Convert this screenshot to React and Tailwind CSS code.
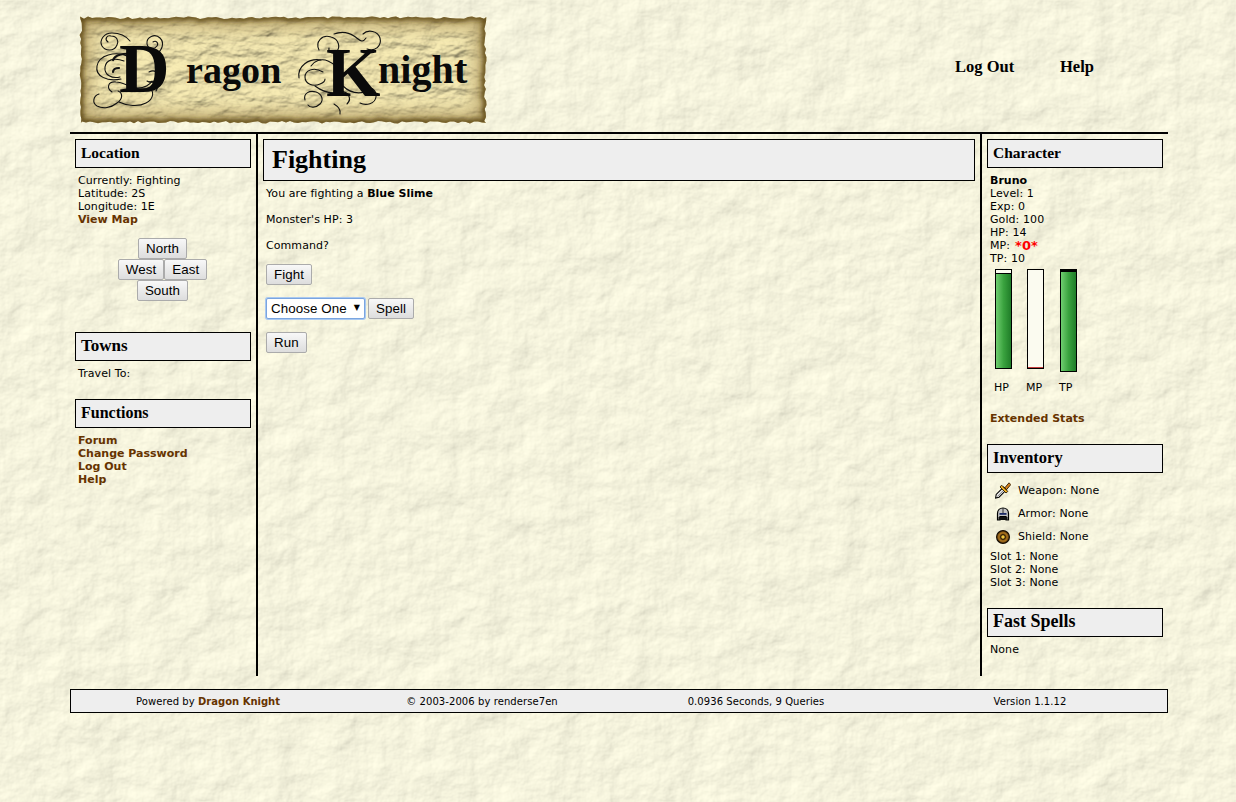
import React from "react";

const btn = "h-[21px] px-[7px] border border-[#ababab] rounded-[2px] bg-linear-to-b from-[#f8f8f8] to-[#dddddd] text-[13.33px] leading-[19px] text-black [font-family:'Liberation_Sans',sans-serif]";
const gothic = "[font-family:'Liberation_Serif',serif] font-bold text-black";
const link = "font-bold tracking-normal text-[#663300]";

function Title({ children, size }) {
  return (
    <div className={"h-[29px] border border-black bg-[#eeeeee] flex items-center pl-[5px] pb-[2px] tracking-normal " + size + " " + gothic}>
      {children}
    </div>
  );
}

function edgePoints() {
  const w = 408, h = 108, pts = [];
  const j = (i) => (Math.sin(i * 12.9898) * 43758.5453 % 1 + 1) % 1;
  let n = 0;
  for (let x = 1; x < w - 1; x += 4) pts.push([x, 0.5 + j(n++) * 2.5]);
  for (let y = 1; y < h - 1; y += 4) pts.push([w - 0.5 - j(n++) * 2.5, y]);
  for (let x = w - 1; x > 1; x -= 4) pts.push([x, h - 0.5 - j(n++) * 2.5]);
  for (let y = h - 1; y > 1; y -= 4) pts.push([0.5 + j(n++) * 2.5, y]);
  return pts.map((p) => p[0].toFixed(1) + "," + p[1].toFixed(1)).join(" ");
}

function Logo() {
  const pts = edgePoints();
  return (
    <svg width="408" height="108" viewBox="0 0 408 108" className="block">
      <defs>
        <clipPath id="parch"><polygon points={pts} /></clipPath>
        <filter id="ptex" x="0" y="0" width="100%" height="100%">
          <feTurbulence type="fractalNoise" baseFrequency="0.04 0.08" numOctaves="5" seed="8" result="n" />
          <feDiffuseLighting in="n" surfaceScale="4.5" lightingColor="#f0e4ae" diffuseConstant="1.08" result="l">
            <feDistantLight azimuth="235" elevation="60" />
          </feDiffuseLighting>
        </filter>
        <filter id="eblur" x="-5%" y="-5%" width="110%" height="110%"><feGaussianBlur stdDeviation="2.5" /></filter>
        <filter id="eblur2" x="-5%" y="-5%" width="110%" height="110%"><feGaussianBlur stdDeviation="8" /></filter>
      </defs>
      <g clipPath="url(#parch)">
        <rect width="408" height="108" fill="#e8d99c" filter="url(#ptex)" />
        <polygon points={pts} fill="none" stroke="#a8925a" strokeWidth="20" filter="url(#eblur2)" opacity="0.7" />
        <polygon points={pts} fill="none" stroke="#5f4818" strokeWidth="6" filter="url(#eblur)" />
      </g>
      <g fill="none" stroke="#111" strokeWidth="1.1" strokeLinecap="round">
        <g>
          <path d="M29 26c-4-3-1-7 3-6c6 0 8 5 6 9c-3 7-12 6-15 1c-3-6 2-13 10-13c8 0 14 3 18 8" />
          <path d="M74 26c3-2 6 1 4 4c-3 4-9 3-10-2c-1-7 8-11 13-6c5 5 2 13-4 16" />
          <path d="M45 45c-10-4-18-1-19 6c-1 8 7 12 15 10" />
          <path d="M48 40c-12-5-28-1-30 10c-2 10 10 16 24 13" />
          <path d="M52 38c-8-1-16 1-18 6M40 52c-4 0-6 2-6 4" strokeWidth="2.2" />
          <path d="M33 76c-6-4-4-11 4-10c8 0 14 6 22 6c6 0 12-3 14-7" />
          <path d="M20 78c-6 2-7 9-2 12c6 3 14 2 20-3c6-4 6-10 1-12" />
          <path d="M40 86c8 4 20 5 27 1c8-4 9-13 2-15" />
          <path d="M70 56c6-3 10 1 8 6c-2 4-7 5-10 3" />
          <path d="M70 66c7-1 10 4 7 9" />
        </g>
        <g>
          <path d="M240 34c-4-8 3-16 12-13c8 2 10 11 5 15c-4 2-8 0-7-4" />
          <path d="M255 18c8-3 14-2 20 2c6 4 8 8 12 2" />
          <path d="M284 18c5-5 15-3 17 4c2 8-5 14-13 11" />
          <path d="M244 56c-10-6-18-1-18 5c0 7 8 10 15 7c3-1 5-3 5-5" />
          <path d="M232 50c3-5 10-8 17-5c7 3 10 8 14 9" />
          <path d="M220 62c-2-12 10-20 22-18" />
          <path d="M226 84c-2-7 5-10 11-8c6 2 8 8 4 12c-4 4-10 4-12 1" />
          <path d="M283 72c8-3 15 2 14 9c-1 7-10 9-16 6" />
          <path d="M255 88c5 3 7 6 6 10M264 70c6 6 14 8 22 6" />
          <path d="M236 70c8 6 16 8 24 6c8-2 14 6 8 12" />
        </g>
      </g>
      <text fill="#0a0a0a" fontFamily="'Liberation Serif', serif" fontWeight="700">
        <tspan x="40" y="76" fontSize="70">D</tspan>
        <tspan x="107" y="67" fontSize="38">ragon</tspan>
        <tspan> </tspan>
        <tspan x="247" y="80" fontSize="70">K</tspan>
        <tspan x="299" y="67" fontSize="40">night</tspan>
      </text>
    </svg>
  );
}

function Bar({ kind, ml }) {
  let inner;
  const green = "bg-linear-to-r from-[#6fce70] via-[#3aa33f] to-[#1f7d28]";
  if (kind === "HP") {
    inner = (
      <div className="h-[100px] border border-black bg-[#fdfdf2] flex flex-col justify-end">
        <div className={"h-[95px] border-t border-black " + green} />
      </div>
    );
  } else if (kind === "MP") {
    inner = (
      <div className="h-[100px] border border-black bg-[#fbfbf0] flex flex-col justify-end">
        <div className="h-[1px] shrink-0 bg-[#c43c3c]" />
      </div>
    );
  } else {
    inner = (
      <div className="h-[103px] border border-black border-t-[2px]">
        <div className={"h-full border-t border-black " + green} />
      </div>
    );
  }
  return (
    <div className={"w-[17px] " + ml}>
      <div className="h-[103px]">{inner}</div>
      <div className="mt-[9px] -ml-[1px]">{kind}</div>
    </div>
  );
}

function Sword() {
  return (
    <svg width="16" height="17" viewBox="0 0 16 17" className="block">
      <path d="M0.6 16l0.6-3.6l7.4-7.4l2.8 2.8l-7.4 7.4z" fill="#f4f4f4" stroke="#000" strokeWidth="1.1" />
      <path d="M2.2 14.6l7-7" stroke="#777" strokeWidth="1" />
      <path d="M6.6 3.2l6.2 6.2l-1.8 1.6l-6-6z" fill="#f0b020" stroke="#2a1a00" strokeWidth="0.9" />
      <path d="M9.8 5.8l4.2-5l1.8 1.8l-4.2 5z" fill="#d9801a" stroke="#2a1a00" strokeWidth="0.9" />
    </svg>
  );
}

function Helmet() {
  return (
    <svg width="16" height="16" viewBox="0 0 16 16" className="block">
      <path d="M2.5 14V7.5C2.5 4 5 2 8 2s5.5 2 5.5 5.5V14h-2.5V10.5H5V14z" fill="#c4c4c4" stroke="#000" strokeWidth="1.2" />
      <rect x="4.5" y="7" width="7" height="1.8" fill="#1b2a66" />
      <path d="M8 2.2V7" stroke="#222" strokeWidth="0.9" />
      <rect x="3.5" y="11" width="9" height="3" fill="#111" />
    </svg>
  );
}

function Shield() {
  return (
    <svg width="16" height="16" viewBox="0 0 16 16" className="block">
      <circle cx="8" cy="8" r="6.4" fill="#7d4f10" stroke="#120b02" strokeWidth="1.2" />
      <circle cx="8" cy="8" r="4.2" fill="none" stroke="#a87420" strokeWidth="1.2" />
      <circle cx="8" cy="8" r="2.3" fill="#f2c53a" stroke="#120b02" strokeWidth="1" />
    </svg>
  );
}

function ItemRow({ icon, children }) {
  return (
    <div className="h-[23px] flex items-center pl-[8px] gap-[7px]">
      <div className="w-[16px] flex justify-center">{icon}</div>
      <span>{children}</span>
    </div>
  );
}

export default function App() {
  return (
    <div className="relative min-h-[802px] overflow-hidden text-[11px] leading-[13px] tracking-[0.08px] text-black [font-family:'DejaVu_Sans',Verdana,sans-serif]">
      <svg className="absolute inset-0 -z-10 w-full h-full" aria-hidden="true">
        <defs>
          <filter id="paper" x="0" y="0" width="100%" height="100%">
            <feTurbulence type="fractalNoise" baseFrequency="0.028 0.034" numOctaves="5" seed="23" result="n" />
            <feDiffuseLighting in="n" surfaceScale="2.4" lightingColor="#f6f4de" diffuseConstant="1.12">
              <feDistantLight azimuth="225" elevation="62" />
            </feDiffuseLighting>
          </filter>
        </defs>
        <rect width="100%" height="100%" fill="#f4f2dc" filter="url(#paper)" />
      </svg>

      <div className="ml-[70px] w-[1098px]">
        <header className="h-[132px] flex">
          <div className="ml-[9px] mt-[16px]"><Logo /></div>
          <nav className={"ml-[468px] mt-[57px] flex h-[20px] text-[16.5px] leading-[20px] tracking-normal " + gothic}>
            <span className="w-[105px]">Log Out</span>
            <span>Help</span>
          </nav>
        </header>

        <main className="h-[544px] flex border-t-2 border-black">
          <aside className="w-[188px] shrink-0 border-r-2 border-black p-[5px]">
            <Title size="text-[15.5px]">Location</Title>
            <div className="mt-[6px] pl-[3px]">
              <div>Currently: Fighting</div>
              <div>Latitude: 2S</div>
              <div>Longitude: 1E</div>
              <div className={link}>View Map</div>
            </div>
            <div className="mt-[12px] pr-[1px] flex flex-col items-center">
              <button className={btn}>North</button>
              <div className="flex">
                <button className={btn}>West</button>
                <button className={btn}>East</button>
              </div>
              <button className={btn}>South</button>
            </div>
            <div className="mt-[31px]"><Title size="text-[17px]">Towns</Title></div>
            <div className="mt-[6px] pl-[3px]">Travel To:</div>
            <div className="mt-[19px]"><Title size="text-[16px]">Functions</Title></div>
            <div className={"mt-[6px] pl-[3px] " + link}>
              <div>Forum</div>
              <div>Change Password</div>
              <div>Log Out</div>
              <div>Help</div>
            </div>
          </aside>

          <section className="flex-1 p-[5px]">
            <h1 className={"h-[42px] border border-black bg-[#eeeeee] flex items-center pl-[8px] pb-[2px] text-[26px] tracking-normal " + gothic}>Fighting</h1>
            <div className="mt-[6px] pl-[3px]">
              <p>You are fighting a <b className="tracking-normal">Blue Slime</b></p>
              <p className="mt-[13px]">Monster's HP: 3</p>
              <p className="mt-[13px]">Command?</p>
              <div className="mt-[12px]"><button className={btn}>Fight</button></div>
              <div className="mt-[13px] flex gap-[3px]">
                <div className="relative">
                  <select className="block w-[99px] h-[21px] appearance-none rounded-[2px] border border-[#7aa5e0] ring-1 ring-[#a9c8f0] bg-white pl-[4px] text-[13.33px] text-black [font-family:'Liberation_Sans',sans-serif]" defaultValue="0">
                    <option value="0">Choose One</option>
                  </select>
                  <span className="absolute right-[5px] top-[3px] text-[8px] leading-[13px] pointer-events-none">▼</span>
                </div>
                <button className={btn}>Spell</button>
              </div>
              <div className="mt-[13px]"><button className={btn}>Run</button></div>
            </div>
          </section>

          <aside className="w-[188px] shrink-0 border-l-2 border-black p-[5px]">
            <Title size="text-[15.5px]">Character</Title>
            <div className="mt-[6px] pl-[3px]">
              <div className="font-bold tracking-normal">Bruno</div>
              <div>Level: 1</div>
              <div>Exp: 0</div>
              <div>Gold: 100</div>
              <div>HP: 14</div>
              <div className="h-[13px] flex items-center gap-[5px]"><span>MP:</span><span className="font-bold text-[13px] leading-[13px] tracking-normal text-[#ff0000]">*0*</span></div>
              <div>TP: 10</div>
            </div>
            <div className="mt-[4px] flex pl-[8px]">
              <Bar kind="HP" ml="" />
              <Bar kind="MP" ml="ml-[15px]" />
              <Bar kind="TP" ml="ml-[16px]" />
            </div>
            <div className={"mt-[18px] pl-[3px] " + link}>Extended Stats</div>
            <div className="mt-[19px]"><Title size="text-[16.5px]">Inventory</Title></div>
            <div className="mt-[6px]">
              <ItemRow icon={<Sword />}>Weapon: None</ItemRow>
              <ItemRow icon={<Helmet />}>Armor: None</ItemRow>
              <ItemRow icon={<Shield />}>Shield: None</ItemRow>
            </div>
            <div className="mt-[2px] pl-[3px]">
              <div>Slot 1: None</div>
              <div>Slot 2: None</div>
              <div>Slot 3: None</div>
            </div>
            <div className="mt-[19px]"><Title size="text-[18px]">Fast Spells</Title></div>
            <div className="mt-[6px] pl-[3px]">None</div>
          </aside>
        </main>

        <footer className="mt-[13px] h-[24px] border border-black bg-[#eeeeee] grid grid-cols-4 items-center text-center text-[10px]">
          <div>Powered by <span className={link}>Dragon Knight</span></div>
          <div>© 2003-2006 by renderse7en</div>
          <div>0.0936 Seconds, 9 Queries</div>
          <div>Version 1.1.12</div>
        </footer>
      </div>
    </div>
  );
}
